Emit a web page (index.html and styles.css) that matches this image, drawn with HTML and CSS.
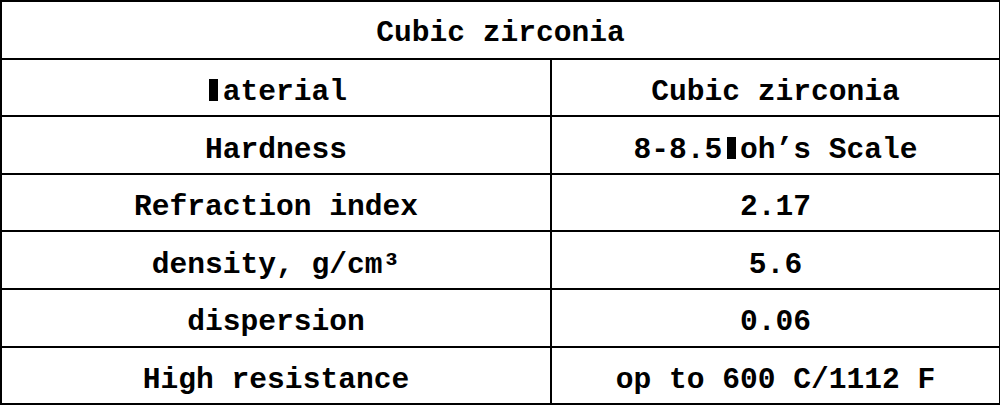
FILE: index.html
```html
<!DOCTYPE html>
<html>
<head>
<meta charset="utf-8">
<link rel="stylesheet" href="styles.css">
</head>
<body>
<table class="spec">
  <colgroup><col class="c1"><col class="c2"></colgroup>
  <tr><th class="title" colspan="2">Cubic zirconia</th></tr>
  <tr><td><span class="blk">M</span>aterial</td><td>Cubic zirconia</td></tr>
  <tr><td>Hardness</td><td>8-8.5<span class="blk">M</span>oh’s Scale</td></tr>
  <tr><td>Refraction index</td><td>2.17</td></tr>
  <tr><td>density, g/cm³</td><td>5.6</td></tr>
  <tr><td>dispersion</td><td>0.06</td></tr>
  <tr><td>High resistance</td><td>op to 600 C/1112 F</td></tr>
</table>
</body>
</html>
```
FILE: styles.css
```css
html, body {
  margin: 0;
  padding: 0;
  background: #fff;
}
.spec {
  border-collapse: collapse;
  width: 999px;
  font-family: "Liberation Mono", "DejaVu Sans Mono", monospace;
  font-weight: bold;
  font-size: 29.6px;
  color: #000;
  table-layout: fixed;
}
.c1 { width: 550px; }
.c2 { width: 449px; }
.spec th, .spec td {
  border: 2px solid #000;
  height: 57.6px;
  box-sizing: border-box;
  padding: 11px 0 0 0;
  text-align: center;
  vertical-align: middle;
  font-weight: bold;
  white-space: nowrap;
  line-height: 1;
}
.spec .title {
  padding-top: 8px;
}
.blk {
  color: transparent;
  background: linear-gradient(#000, #000) no-repeat;
  background-size: 9px 22px;
  background-position: 50% 4px;
}
```
